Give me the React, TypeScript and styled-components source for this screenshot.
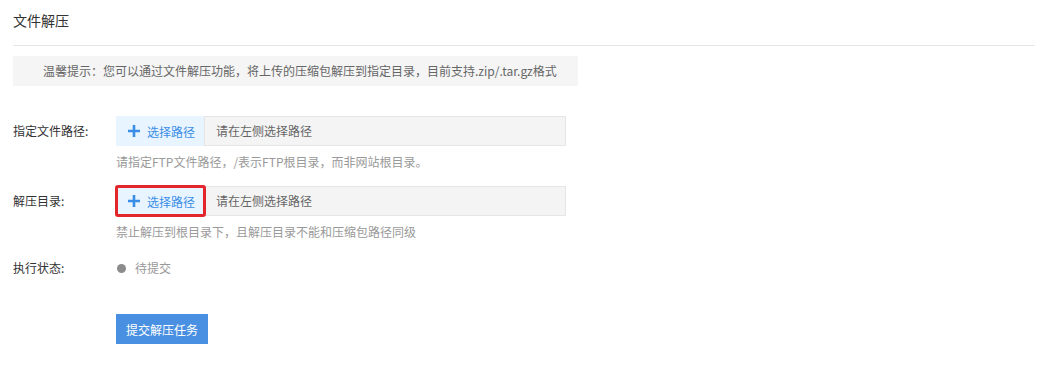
import React from "react";
import styled, { createGlobalStyle } from "styled-components";

const Global = createGlobalStyle`
  html, body { margin: 0; padding: 0; background: #fff; }
  body {
    font-family: "Noto Sans CJK SC", "Noto Sans", "Liberation Sans", sans-serif;
    color: #333;
    -webkit-font-smoothing: antialiased;
  }
`;

const Page = styled.div`
  padding: 0 11px 0 13px;
`;

const Header = styled.div`
  box-sizing: border-box;
  height: 46px;
  padding-top: 10px;
  border-bottom: 1px solid #e6e6e6;
`;

const Title = styled.h1`
  margin: 0;
  font-size: 14px;
  font-weight: 400;
  line-height: 20px;
  color: #333;
`;

const Tip = styled.div`
  margin-top: 10px;
  width: 565px;
  height: 30px;
  box-sizing: border-box;
  padding-left: 30px;
  background: #f5f5f5;
  font-size: 12px;
  line-height: 30px;
  color: #666;
`;

const Form = styled.div`
  margin-top: 30px;
  display: flex;
  flex-direction: column;
`;

const Row = styled.div<{ $mt?: number }>`
  display: grid;
  grid-template-columns: 103px 1fr;
  margin-top: ${(p) => p.$mt ?? 0}px;
`;

const Label = styled.div<{ $lh?: number }>`
  font-size: 12px;
  line-height: ${(p) => p.$lh ?? 30}px;
  color: #333;
`;

const Field = styled.div`
  display: flex;
  flex-direction: column;
`;

const InputGroup = styled.div`
  display: flex;
  width: 450px;
  height: 30px;
`;

const PickWrap = styled.div`
  position: relative;
  display: flex;
`;

const PickButton = styled.button`
  display: flex;
  align-items: center;
  gap: 7px;
  width: 88px;
  height: 30px;
  padding: 0 0 0 12px;
  box-sizing: border-box;
  border: none;
  background: #e8f4ff;
  color: #3a8ee6;
  font-family: inherit;
  font-size: 12px;
  cursor: pointer;
`;

const Highlight = styled.span`
  position: absolute;
  left: -1px;
  top: -1px;
  right: -2px;
  bottom: -1px;
  border: 3px solid #e3262b;
  border-radius: 3px;
  pointer-events: none;
`;

const PathBox = styled.div`
  flex: 1;
  box-sizing: border-box;
  border: 1px solid #e6e6e6;
  background: #f4f4f4;
  padding-left: 11px;
  font-size: 12px;
  line-height: 28px;
  color: #666;
`;

const Hint = styled.div`
  margin-top: 6px;
  font-size: 12px;
  line-height: 20px;
  color: #999;
`;

const Status = styled.div`
  display: flex;
  align-items: center;
  gap: 9px;
  padding-left: 1px;
  font-size: 12px;
  line-height: 20px;
  color: #999;
`;

const Dot = styled.span`
  width: 9px;
  height: 9px;
  border-radius: 50%;
  background: #8c8c8c;
`;

const Submit = styled.button`
  width: 92px;
  height: 30px;
  border: none;
  background: #4a90e2;
  color: #fff;
  font-family: inherit;
  font-size: 12px;
  padding: 0;
  cursor: pointer;
`;

const Plus = () => (
  <svg width="12" height="12" viewBox="0 0 12 12">
    <path d="M6 0v12M0 6h12" stroke="#3a8ee6" strokeWidth="2.6" />
  </svg>
);

const PathInput = ({ highlight }: { highlight?: boolean }) => (
  <InputGroup>
    <PickWrap>
      <PickButton>
        <Plus />
        选择路径
      </PickButton>
      {highlight && <Highlight />}
    </PickWrap>
    <PathBox>请在左侧选择路径</PathBox>
  </InputGroup>
);

export default function App() {
  return (
    <>
      <Global />
      <Page>
        <Header>
          <Title>文件解压</Title>
        </Header>
        <Tip>温馨提示：您可以通过文件解压功能，将上传的压缩包解压到指定目录，目前支持.zip/.tar.gz格式</Tip>
        <Form>
          <Row>
            <Label>指定文件路径:</Label>
            <Field>
              <PathInput />
              <Hint>请指定FTP文件路径，/表示FTP根目录，而非网站根目录。</Hint>
            </Field>
          </Row>
          <Row $mt={14}>
            <Label>解压目录:</Label>
            <Field>
              <PathInput highlight />
              <Hint>禁止解压到根目录下，且解压目录不能和压缩包路径同级</Hint>
            </Field>
          </Row>
          <Row $mt={16}>
            <Label $lh={20}>执行状态:</Label>
            <Status>
              <Dot />
              待提交
            </Status>
          </Row>
          <Row $mt={36}>
            <span />
            <div>
              <Submit>提交解压任务</Submit>
            </div>
          </Row>
        </Form>
      </Page>
    </>
  );
}
